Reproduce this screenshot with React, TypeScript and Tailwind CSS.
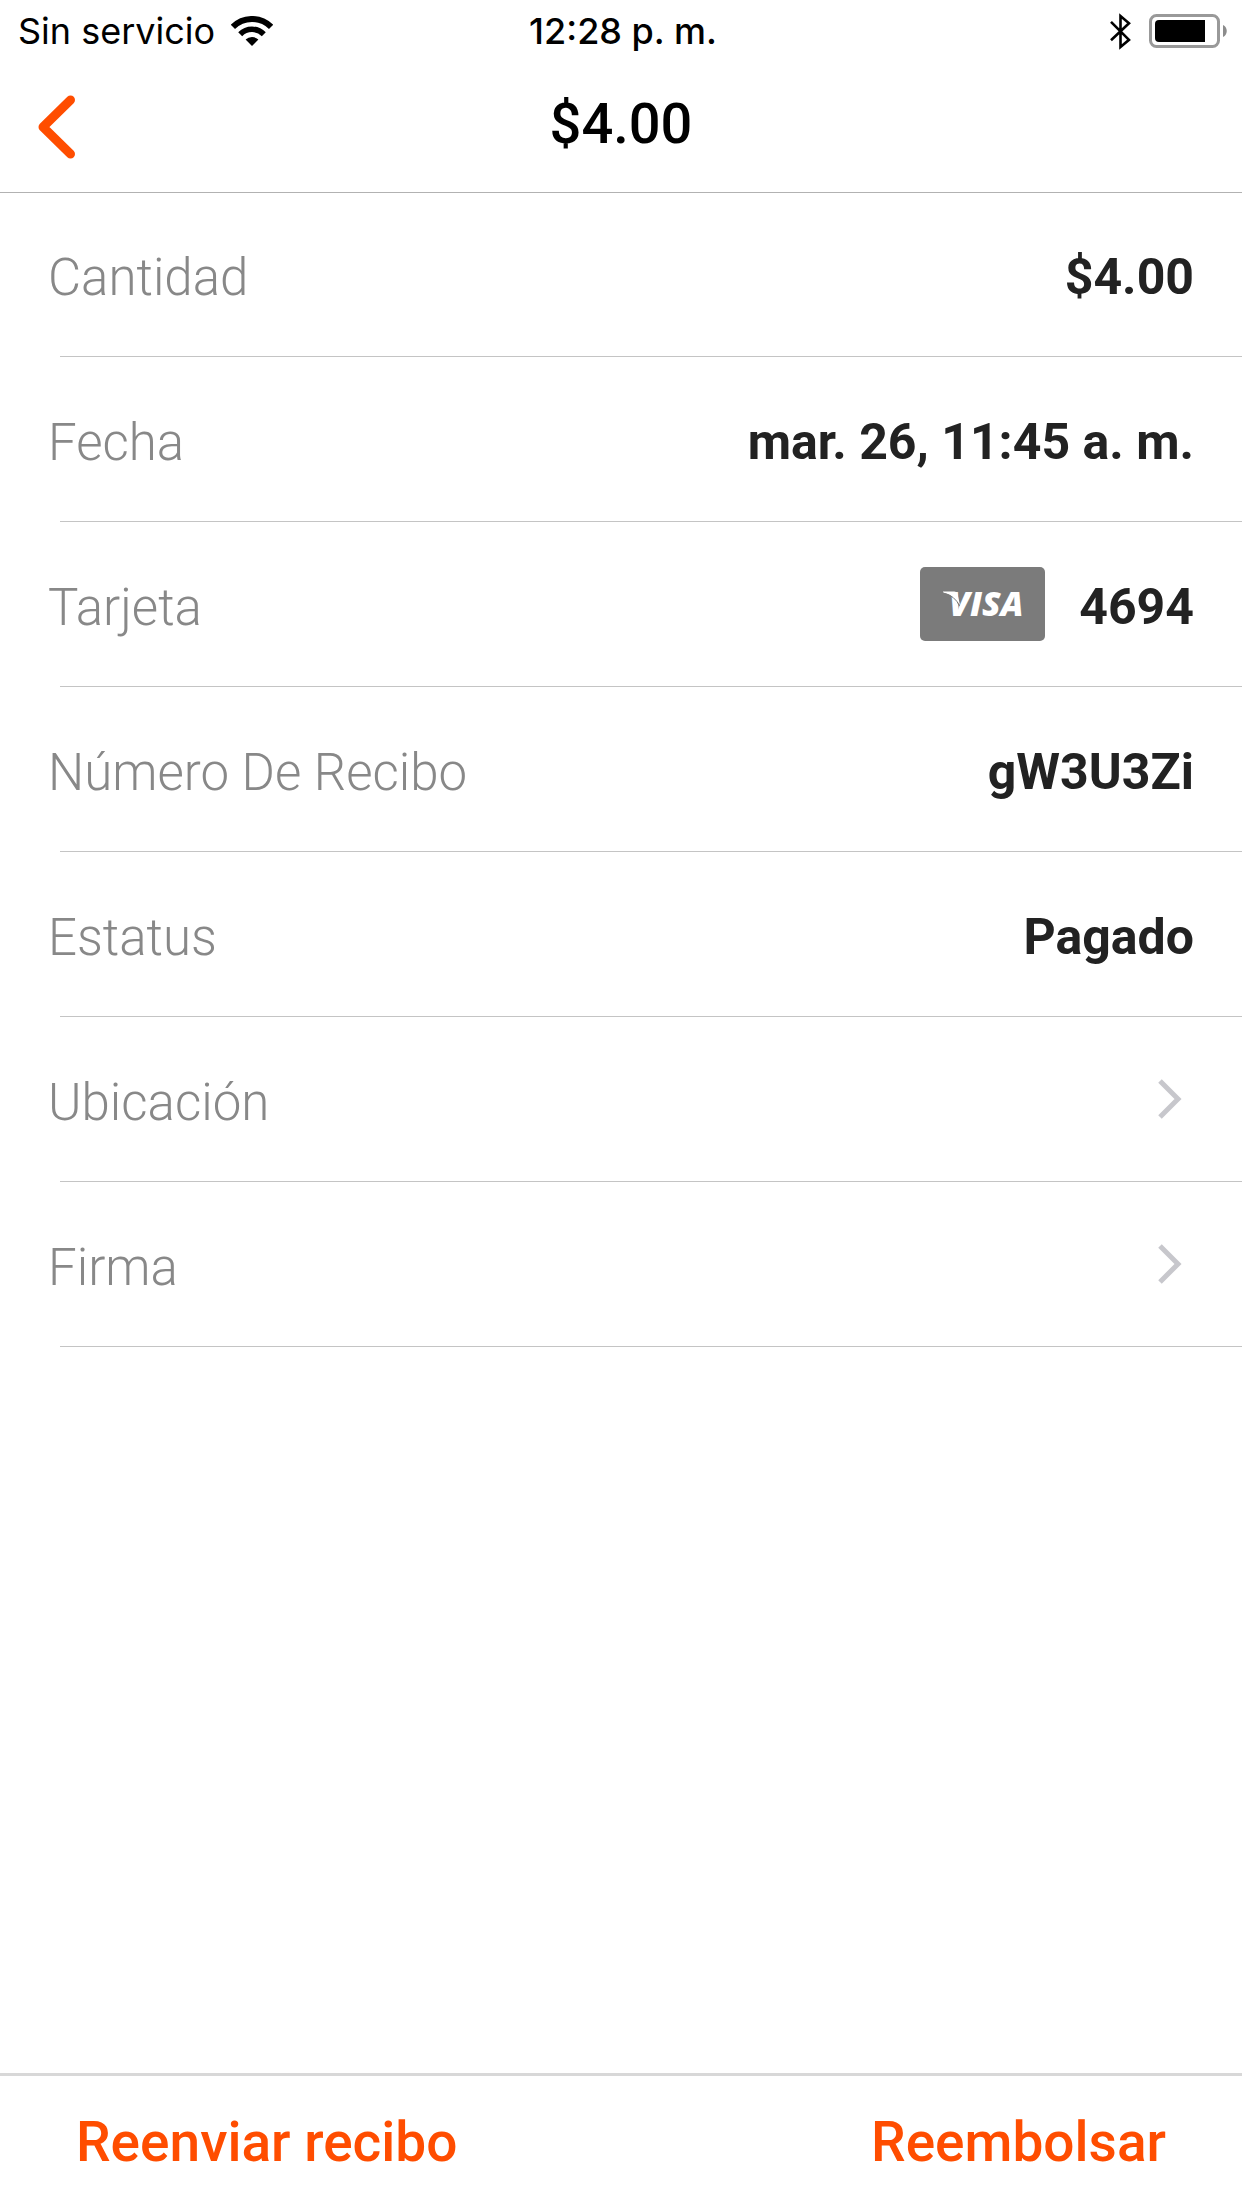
import type { ReactNode } from 'react';

function WifiIcon() {
  return (
    <svg viewBox="0 0 42 30" className="h-[30px] w-[42px]" aria-hidden="true">
      <g fill="none" stroke="#000">
        <path d="M1.9 10.9A27 27 0 0 1 40.1 10.9" strokeWidth="6" />
        <path d="M9.2 18.2A16.7 16.7 0 0 1 32.8 18.2" strokeWidth="5.6" />
      </g>
      <path d="M21 30L14.6 23.6A9 9 0 0 1 27.4 23.6Z" />
    </svg>
  );
}

function BluetoothIcon() {
  return (
    <svg viewBox="0 0 21 37" className="h-[37px] w-[21px]" aria-hidden="true">
      <path
        d="M1 8.8L19 26.8L10.5 34V3L19 10.3L1 27.3"
        fill="none"
        stroke="#000"
        strokeWidth="2.6"
        strokeMiterlimit="10"
      />
    </svg>
  );
}

function BatteryIcon() {
  return (
    <svg viewBox="0 0 79 34" className="h-[34px] w-[79px]" aria-hidden="true">
      <rect x="1.5" y="1.5" width="68" height="31" rx="6" fill="none" stroke="#999" strokeWidth="3" />
      <path d="M56 6V28H10a4 4 0 0 1-4-4V10a4 4 0 0 1 4-4Z" />
      <path d="M74 11C79 13 79 21 74 23Z" fill="#8c8c8c" />
    </svg>
  );
}

function BackIcon() {
  return (
    <svg viewBox="0 0 38 64" className="h-[64px] w-[38px]" aria-hidden="true">
      <path
        d="M32.5 5L5 32L32.5 59"
        fill="none"
        stroke="#ff4d00"
        strokeWidth="9"
        strokeLinecap="round"
        strokeLinejoin="round"
      />
    </svg>
  );
}

function ChevronIcon() {
  return (
    <svg viewBox="0 0 24 40" className="h-[40px] w-[24px]" aria-hidden="true">
      <path d="M2 2L20 20L2 38" fill="none" stroke="#c7c7cc" strokeWidth="5" />
    </svg>
  );
}

function VisaCard() {
  return (
    <svg viewBox="0 0 125 74" className="mb-1.5 h-[74px] w-[125px]" role="img" aria-label="Visa">
      <rect width="125" height="74" rx="5" fill="#7b7b7b" />
      <text
        x="29"
        y="49"
        fill="#fff"
        fontFamily="'Open Sans', sans-serif"
        fontSize="34"
        fontWeight="800"
        fontStyle="italic"
      >
        VISA
      </text>
      <path d="M23 24.5H34Q37 24.5 37.5 27L40 38Q35 28 23 25.5Z" fill="#fff" />
      <path d="M23 26Q35 28.5 39.5 39" fill="none" stroke="#7b7b7b" strokeWidth="1" />
    </svg>
  );
}

function Row({ label, children }: { label: string; children: ReactNode }) {
  return (
    <div>
      <div className="flex h-[164px] items-center justify-between pt-1.5 pr-12 pl-12">
        <dt className="font-light text-[#888]">{label}</dt>
        <dd className="flex items-center gap-[34px] text-[50px] font-bold text-[#222]">{children}</dd>
      </div>
      <div className="ml-[60px] h-px bg-[#c4c4c4]" />
    </div>
  );
}

function LinkRow({ label }: { label: string }) {
  return (
    <li>
      <button type="button" className="flex h-[164px] w-full items-center justify-between pr-[60px] pl-12">
        <span className="pt-1.5 font-light text-[#888]">{label}</span>
        <ChevronIcon />
      </button>
      <div className="ml-[60px] h-px bg-[#c4c4c4]" />
    </li>
  );
}

export default function App() {
  return (
    <div className="flex min-h-screen flex-col bg-white font-['Roboto',sans-serif] text-[51px] leading-none">
      <header className="flex h-[192px] flex-col shadow-[0_1px_0_#b2b2b2]">
        <div className="grid h-[62px] grid-cols-[1fr_auto_1fr] items-center pr-3.5 pl-[18px] font-['Inter',sans-serif] text-[36px] text-black">
          <div className="flex items-center gap-4">
            <span>Sin servicio</span>
            <WifiIcon />
          </div>
          <span className="font-medium">12:28 p. m.</span>
          <div className="flex items-center justify-end gap-[18px]">
            <BluetoothIcon />
            <BatteryIcon />
          </div>
        </div>
        <div className="grid flex-1 grid-cols-[1fr_auto_1fr] items-center px-[38px]">
          <button type="button" aria-label="Atrás" className="justify-self-start">
            <BackIcon />
          </button>
          <h1 className="pb-1.5 text-[56px] font-medium text-black">$4.00</h1>
        </div>
      </header>

      <main className="flex-1">
        <dl>
          <Row label="Cantidad">$4.00</Row>
          <Row label="Fecha">mar. 26, 11:45 a. m.</Row>
          <Row label="Tarjeta">
            <VisaCard />
            <span>4694</span>
          </Row>
          <Row label="Número De Recibo">gW3U3Zi</Row>
          <Row label="Estatus">Pagado</Row>
        </dl>
        <ul>
          <LinkRow label="Ubicación" />
          <LinkRow label="Firma" />
        </ul>
      </main>

      <footer className="flex h-[135px] items-center justify-between border-t-[3px] border-[#d8d8d8] px-[76px] text-[55px] font-medium text-[#ff4d00]">
        <button type="button">Reenviar recibo</button>
        <button type="button">Reembolsar</button>
      </footer>
    </div>
  );
}
